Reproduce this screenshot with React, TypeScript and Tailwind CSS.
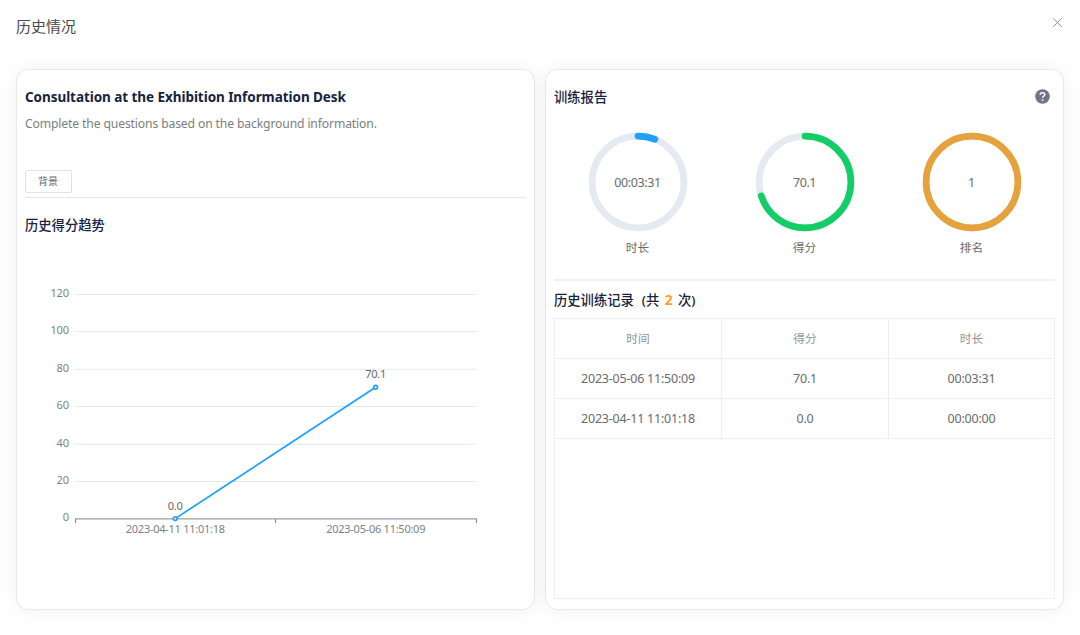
import React from 'react';

interface RingStat {
  id: string;
  label: string;
  value: string;
  percent: number;
  color: string;
}

interface TrainingRecord {
  time: string;
  score: string;
  duration: string;
}

const stats: RingStat[] = [
  { id: 'duration', label: '时长', value: '00:03:31', percent: 6, color: '#20a0ff' },
  { id: 'score', label: '得分', value: '70.1', percent: 70.1, color: '#13ce66' },
  { id: 'rank', label: '排名', value: '1', percent: 100, color: '#e6a23c' },
];

const records: TrainingRecord[] = [
  { time: '2023-05-06 11:50:09', score: '70.1', duration: '00:03:31' },
  { time: '2023-04-11 11:01:18', score: '0.0', duration: '00:00:00' },
];

const ticks = [
  { value: 120, y: 24.5 },
  { value: 100, y: 61.5 },
  { value: 80, y: 99.3 },
  { value: 60, y: 136.5 },
  { value: 40, y: 174.3 },
  { value: 20, y: 211.5 },
  { value: 0, y: 249 },
];

function ScoreChart() {
  return (
    <svg width="500" height="290" viewBox="0 0 500 290" className="mt-[34px] block text-[11px]">
      {ticks.map((tick) => (
        <g key={tick.value}>
          {tick.value > 0 && <path d={`M50 ${tick.y}H451`} stroke="#e4e8f2" />}
          <text x="44" y={tick.y + 2.4} textAnchor="end" fill="#7c7f88" letterSpacing="-0.1">
            {tick.value}
          </text>
        </g>
      ))}
      <path d="M50 248.8H452" stroke="#9a9ca3" strokeWidth="1.2" />
      <path d="M50.5 249v4M250.5 249v4M451.5 249v4" stroke="#83868e" />
      <text x="150.3" y="263" textAnchor="middle" fill="#7c7f88" letterSpacing="-0.26">
        2023-04-11 11:01:18
      </text>
      <text x="350.7" y="263" textAnchor="middle" fill="#7c7f88" letterSpacing="-0.26">
        2023-05-06 11:50:09
      </text>
      <path d="M150.2 248.6L350.6 117.3" stroke="#1b9ffb" strokeWidth="1.7" />
      <circle cx="150.2" cy="248.6" r="1.9" fill="#fff" stroke="#1b9ffb" strokeWidth="1.6" />
      <circle cx="350.6" cy="117.3" r="1.9" fill="#fff" stroke="#1b9ffb" strokeWidth="1.6" />
      <text x="150.2" y="239.6" textAnchor="middle" fill="#666" letterSpacing="-0.2">
        0.0
      </text>
      <text x="350.6" y="108" textAnchor="middle" fill="#666" letterSpacing="-0.3">
        70.1
      </text>
    </svg>
  );
}

function Ring({ stat }: { stat: RingStat }) {
  return (
    <div className="flex flex-col items-center">
      <div className="grid h-[100px] w-[100px] place-items-center">
        <svg viewBox="0 0 100 100" className="col-start-1 row-start-1 h-[100px] w-[100px] -rotate-90">
          <circle cx="50" cy="50" r="45.9" fill="none" stroke="#e5e9f2" strokeWidth="6.7" />
          <circle
            cx="50"
            cy="50"
            r="45.9"
            fill="none"
            stroke={stat.color}
            strokeWidth="6.7"
            strokeLinecap="round"
            pathLength="100"
            strokeDasharray={`${stat.percent} 100`}
          />
        </svg>
        <span className="col-start-1 row-start-1 pt-[2px] text-[12.5px] tracking-[-0.4px]">{stat.value}</span>
      </div>
      <span className="mt-[6px] mb-px text-[11.7px] leading-[18px]">{stat.label}</span>
    </div>
  );
}

function Cell({ children }: { children: React.ReactNode }) {
  return (
    <div className="flex items-center justify-center border-r border-b border-[#ebeef5]">{children}</div>
  );
}

export default function App() {
  return (
    <div className="flex h-[635px] w-[1080px] flex-col overflow-hidden bg-white font-['Noto_Sans','Noto_Sans_CJK_SC',sans-serif] text-[#6a6a6a]">
      <header className="flex h-[69px] items-start justify-between pr-[17px] pl-4">
        <h1 className="mt-[14px] text-[15px] leading-[24px] text-[#4a4a4a]">历史情况</h1>
        <button aria-label="Close" className="mt-[17px]">
          <svg width="11" height="11" viewBox="0 0 11 11" fill="none" stroke="#909399">
            <path d="M1.2 1.2l8.6 8.6M9.8 1.2L1.2 9.8" />
          </svg>
        </button>
      </header>

      <main className="flex gap-[10px] pl-4">
        <section className="h-[541px] w-[519px] rounded-[12px] border border-[#e8e8eb] bg-white px-2 shadow-[0_0_20px_rgba(30,40,80,0.06)]">
          <h2 className="mt-[16px] text-[13.5px] leading-[22px] font-bold tracking-[-0.06px] text-[#15233f]">
            Consultation at the Exhibition Information Desk
          </h2>
          <p className="mt-[6px] text-[12.2px] leading-[20px] tracking-[-0.15px] text-[#7d7d7d]">
            Complete the questions based on the background information.
          </p>
          <button className="mt-[36px] block h-[23px] w-[47px] rounded-[2px] border border-[#dfe1e8] pr-px text-[10px] leading-[21px]">
            背景
          </button>
          <div className="mt-1 h-px bg-[#e6e6e8]" />
          <h2 className="mt-[16px] text-[13.3px] leading-[22px] font-medium text-[#15233f]">历史得分趋势</h2>
          <ScoreChart />
        </section>

        <section className="h-[541px] w-[519px] rounded-[12px] border border-[#e8e8eb] bg-white px-2 shadow-[0_0_20px_rgba(30,40,80,0.06)]">
          <div className="mt-[16px] flex h-[22px] items-center justify-between pr-[5px]">
            <h2 className="text-[13.3px] leading-[22px] font-medium text-[#15233f]">训练报告</h2>
            <svg width="15" height="15" viewBox="0 0 15 15" fill="none" className="mb-px">
              <circle cx="7.5" cy="7.5" r="7.3" fill="#6f7687" />
              <path
                d="M5.2 5.8C5.2 3 9.8 3 9.8 5.6C9.8 7.1 7.6 7.2 7.6 8.8"
                stroke="#fff"
                strokeWidth="1.5"
              />
              <circle cx="7.6" cy="11.1" r=".95" fill="#fff" />
            </svg>
          </div>
          <div className="mt-[24px] grid grid-cols-3">
            {stats.map((stat) => (
              <Ring key={stat.id} stat={stat} />
            ))}
          </div>
          <div className="mt-[22px] h-[2px] bg-[#f1f1f3]" />
          <h2 className="mt-[8px] text-[13.3px] leading-[22px] font-medium whitespace-pre text-[#15233f]">
            历史训练记录<span className="ml-2">(共 </span>
            <span className="mr-[2px] ml-[2px] text-[13.8px] font-bold text-[#ff9f1c]">2</span> 次)
          </h2>
          <div className="mt-[7px] h-[281px] border border-[#ebeef5] text-[12.5px] tracking-[-0.22px]">
            <div className="-mr-px grid auto-rows-[40px] grid-cols-[167px_167px_1fr]">
              {['时间', '得分', '时长'].map((title) => (
                <Cell key={title}>
                  <span className="text-[11.7px] tracking-normal text-[#909399]">{title}</span>
                </Cell>
              ))}
              {records.map((record) => (
                <React.Fragment key={record.time}>
                  <Cell>
                    <span className="pt-[2px]">{record.time}</span>
                  </Cell>
                  <Cell>
                    <span className="pt-[2px]">{record.score}</span>
                  </Cell>
                  <Cell>
                    <span className="pt-[2px]">{record.duration}</span>
                  </Cell>
                </React.Fragment>
              ))}
            </div>
          </div>
        </section>
      </main>
    </div>
  );
}
